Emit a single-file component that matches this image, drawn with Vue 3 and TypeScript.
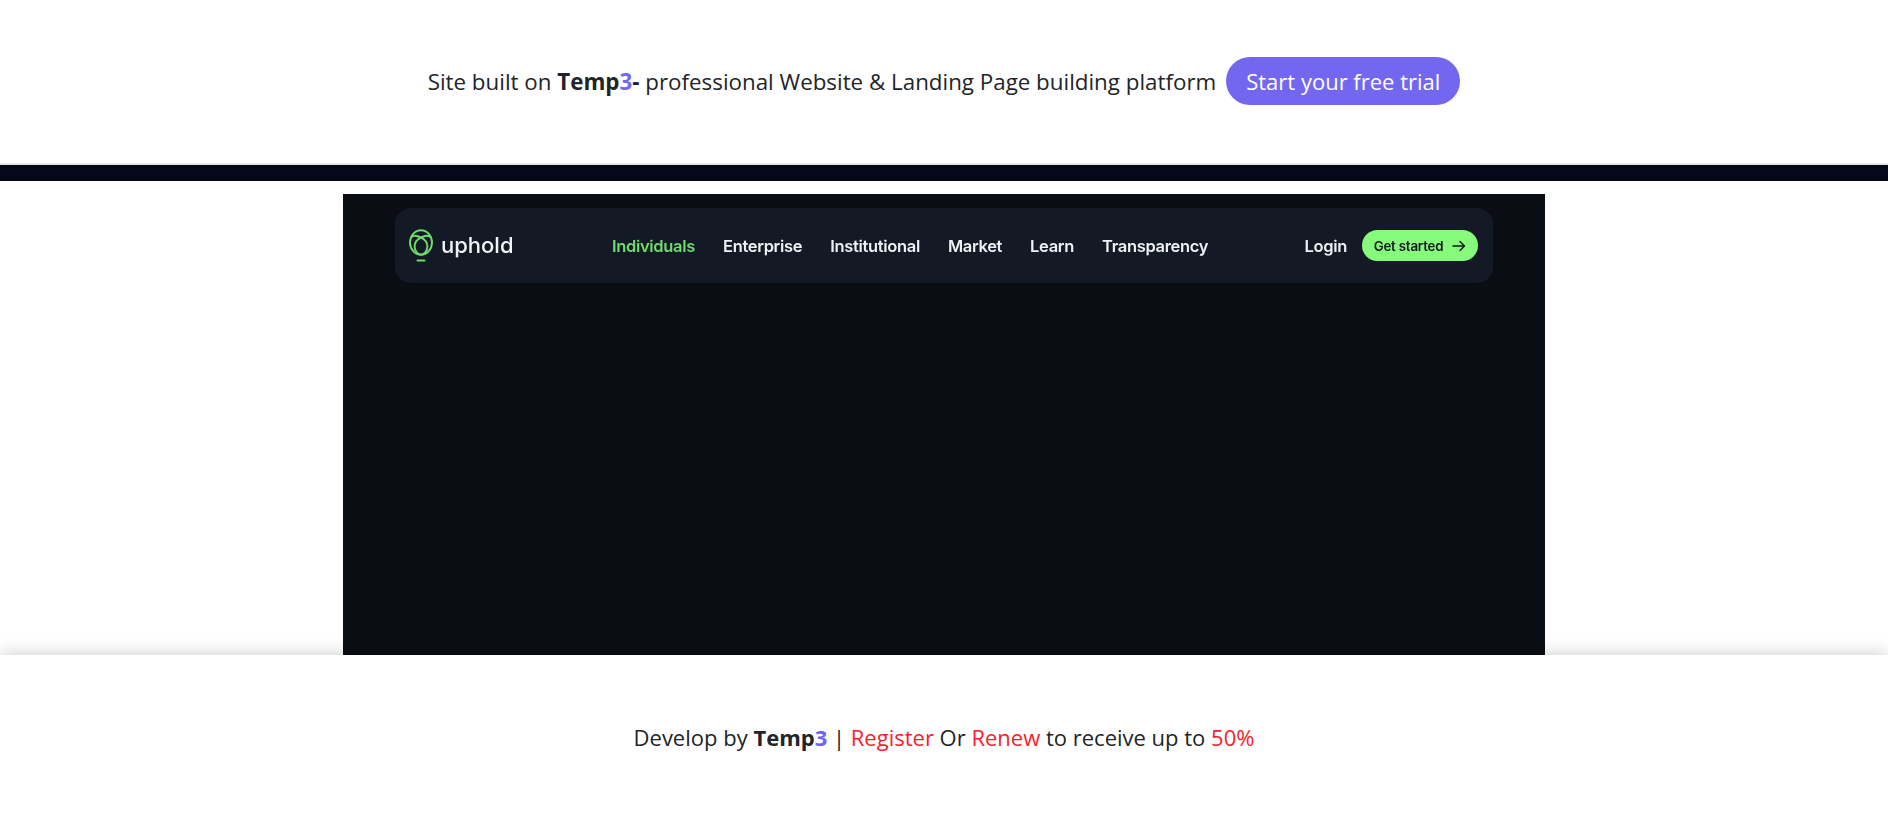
<script setup lang="ts">
const links: string[] = ['Enterprise', 'Institutional', 'Market', 'Learn', 'Transparency']
</script>

<template>
  <div class="page">
    <header class="top">
      <span class="msg">Site built on <b>Temp<i>3</i>-</b> professional Website &amp; Landing Page building platform</span>
      <a class="cta">Start your free trial</a>
    </header>
    <div class="band"></div>
    <main class="stage">
      <div class="shot">
        <nav class="nav">
          <div class="brand">
            <svg class="logo" viewBox="0 0 24 33" fill="none" stroke="#6fdc6c" stroke-width="1.9" stroke-linecap="round">
              <ellipse cx="12" cy="13.5" rx="11" ry="12.2" />
              <path d="M2.6 8C6.5 4.5 18.4 9.5 18.4 17.5C18.4 22 15 25.6 12 25.6C9 25.6 5.6 22 5.6 17.5C5.6 9.5 17.5 4.5 21.4 8" />
              <path d="M8.5 31.5h7" />
            </svg>
            <span class="word">uphold</span>
          </div>
          <div class="links">
            <a class="active">Individuals</a>
            <a v-for="l in links" :key="l">{{ l }}</a>
          </div>
          <div class="actions">
            <a>Login</a>
            <span class="started">Get started
              <svg viewBox="0 0 14 12" fill="none" stroke="#10151c" stroke-width="1.4" stroke-linecap="round" stroke-linejoin="round"><path d="M1 6h11.5M8 1.5 12.5 6 8 10.5" /></svg>
            </span>
          </div>
        </nav>
      </div>
    </main>
    <footer class="bottom">
      <span>Develop by <b>Temp<i class="alt">3</i></b> | <em>Register</em> Or <em>Renew</em> to receive up to <em>50%</em></span>
    </footer>
  </div>
</template>

<style>
html, body { margin: 0; background: #fff; }
</style>

<style scoped>
.page {
  height: 818px;
  display: flex;
  flex-direction: column;
  overflow: hidden;
  font-family: "Open Sans", sans-serif;
  font-size: 22px;
  color: #212529;
}
.top {
  flex: none;
  height: 106px;
  border-bottom: 2px solid #e6e6e6;
  display: flex;
  align-items: flex-start;
  justify-content: center;
  gap: 10px;
  padding-top: 57px;
}
.msg { line-height: 50px; font-size: 22.35px; }
b { font-weight: 700; }
i { font-style: normal; color: #7367f0; }
i.alt { color: #6c63ff; }
.cta {
  height: 48px;
  line-height: 48px;
  padding: 0 20px;
  border-radius: 24px;
  background: #7367f0;
  color: #fff;
}
.band { flex: none; height: 16px; background: #050819; }
.stage { flex: none; display: flex; justify-content: center; padding-top: 13px; }
.shot {
  width: 1202px;
  height: 461px;
  background: #0a0d14;
  padding: 14px 52px 0;
  box-sizing: border-box;
}
.nav {
  height: 75px;
  background: #141a25;
  border-radius: 16px;
  display: flex;
  align-items: center;
  padding: 0 15px 0 14px;
  font-family: "Inter", sans-serif;
  font-weight: 600;
  font-size: 16.5px;
  letter-spacing: -0.32px;
  color: #eef0f3;
  filter: blur(0.4px);
}
.brand { display: flex; align-items: center; gap: 8px; width: 203px; }
.logo { width: 24px; height: 33px; }
.word { font-weight: 500; font-size: 22px; letter-spacing: 0; color: #f0f2f4; position: relative; top: -1px; }
.links { display: flex; gap: 28px; }
.active { color: #6fdc6c; }
.actions { margin-left: auto; display: flex; align-items: center; gap: 15px; }
.started {
  width: 116px;
  height: 31px;
  border-radius: 16px;
  background: #86fb7b;
  color: #10151c;
  font-size: 13.3px;
  font-weight: 600;
  letter-spacing: -0.2px;
  display: flex;
  align-items: center;
  justify-content: center;
  gap: 9px;
}
.started svg { width: 14px; height: 12px; }
.bottom {
  flex: 1;
  display: flex;
  justify-content: center;
  align-items: center;
  background: #fff;
  box-shadow: 0 0 16px rgba(0, 0, 0, 0.22);
  position: relative;
}
em { font-style: normal; color: #f5222d; }
</style>
